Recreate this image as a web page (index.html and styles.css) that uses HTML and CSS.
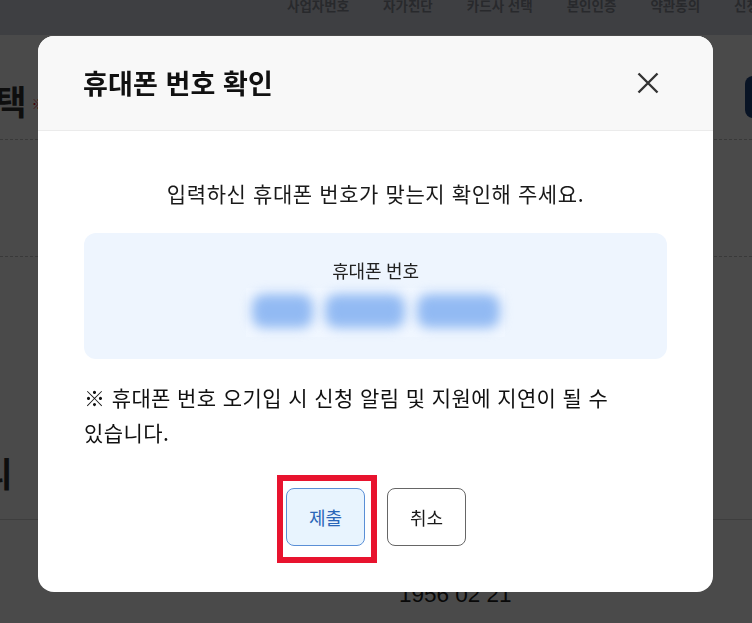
FILE: index.html
```html
<!DOCTYPE html>
<html lang="ko">
<head>
<meta charset="utf-8">
<title>휴대폰 번호 확인</title>
<link rel="stylesheet" href="styles.css">
</head>
<body>
<div class="page">
  <nav class="steps">
    <span>사업자번호</span>
    <span>자가진단</span>
    <span>카드사 선택</span>
    <span>본인인증</span>
    <span>약관동의</span>
    <span>신청완료</span>
  </nav>
  <section class="row row1">
    <div class="label label-first">선택</div>
    <span class="req">※</span>
    <span class="navy-btn"></span>
  </section>
  <section class="row row2"></section>
  <section class="row row3">
    <div class="label label-second">관리</div>
  </section>
  <section class="row row4">
    <div class="value">1956 02 21</div>
  </section>
</div>

<div class="overlay">
  <div class="dialog" role="dialog" aria-labelledby="dlg-title">
    <header class="dialog-head">
      <h2 id="dlg-title" class="dialog-title">휴대폰 번호 확인</h2>
      <button class="close-btn" aria-label="닫기">
        <svg viewBox="0 0 22 22" width="22" height="22">
          <path d="M1.5 1.5 L20.5 20.5 M20.5 1.5 L1.5 20.5" stroke="#333" stroke-width="2.4" stroke-linecap="butt" fill="none"/>
        </svg>
      </button>
    </header>
    <div class="dialog-body">
      <p class="lead">입력하신 휴대폰 번호가 맞는지 확인해 주세요.</p>
      <div class="phone-box">
        <div class="phone-label">휴대폰 번호</div>
        <div class="phone-masked">
          <span class="blob b1"></span>
          <span class="blob b2"></span>
          <span class="blob b3"></span>
        </div>
      </div>
      <p class="note">※ 휴대폰 번호 오기입 시 신청 알림 및 지원에 지연이 될 수 있습니다.</p>
      <div class="actions">
        <div class="submit-wrap">
          <button class="btn btn-submit">제출</button>
          <span class="highlight"></span>
        </div>
        <button class="btn btn-cancel">취소</button>
      </div>
    </div>
  </div>
</div>
</body>
</html>
```

FILE: styles.css
```css
* { box-sizing: border-box; }

html, body {
  margin: 0;
  padding: 0;
  width: 752px;
  height: 623px;
  overflow: hidden;
  background: #fff;
  font-family: "Noto Sans CJK KR", "Noto Sans", sans-serif;
}

.page {
  width: 752px;
  height: 623px;
  overflow: hidden;
  background: #fff;
}

.steps {
  height: 35px;
  background: #d6d9e4;
  display: flex;
  gap: 34px;
  padding-left: 287px;
  overflow: hidden;
  white-space: nowrap;
}

.steps span {
  font-size: 13.5px;
  font-weight: 700;
  line-height: 16px;
  margin-top: -3px;
  color: #8a8f98;
}

.row {
  display: flex;
  width: 752px;
}

.row1 {
  height: 105px;
  padding-top: 28px;
  align-items: center;
  border-bottom: 1px dashed #c4c4c4;
}

.label {
  font-size: 34px;
  font-weight: 700;
  color: #333;
  line-height: 44px;
  white-space: nowrap;
}

.label-first { margin-left: -36px; }

.req {
  font-size: 14px;
  line-height: 20px;
  color: #e0142d;
  margin-left: 5px;
  margin-top: 4px;
}

.navy-btn {
  margin-left: auto;
  margin-right: -40px;
  width: 47px;
  height: 42px;
  border-radius: 8px;
  background: #22457f;
  margin-top: -8px;
}

.row2 {
  height: 117px;
  border-bottom: 1px dashed #c4c4c4;
}

.row3 {
  height: 263px;
  align-items: flex-end;
  padding-bottom: 24px;
  border-bottom: 1px solid #d4d4d4;
}

.label-second { margin-left: -50px; }

.row4 {
  height: 103px;
  padding-left: 399px;
}

.value {
  font-family: "Liberation Sans", Arial, sans-serif;
  font-size: 22.5px;
  color: #222;
  margin-top: 62px;
  line-height: 26px;
}

/* overlay + dialog */
.overlay {
  position: fixed;
  inset: 0;
  background: rgba(0, 0, 0, 0.71);
  display: flex;
  justify-content: center;
  align-items: flex-start;
  padding-top: 36px;
}

.dialog {
  width: 675px;
  background: #fff;
  border-radius: 16px;
  overflow: hidden;
  margin-left: -1px;
}

.dialog-head {
  height: 95px;
  background: #f8f8f8;
  border-bottom: 1px solid #ebebeb;
  display: flex;
  align-items: center;
  justify-content: space-between;
  padding: 0 54px 0 45px;
}

.dialog-title {
  margin: 0;
  font-size: 27px;
  font-weight: 700;
  color: #111;
  line-height: 36px;
  letter-spacing: 0.1px;
}

.close-btn {
  border: 0;
  background: none;
  padding: 0;
  width: 22px;
  height: 22px;
  display: flex;
  margin-top: -1px;
}

.dialog-body {
  padding: 47px 46px 46px;
}

.lead {
  margin: 0;
  text-align: center;
  font-size: 21px;
  line-height: 30px;
  color: #1a1a1a;
  letter-spacing: 0.6px;
}

.phone-box {
  margin-top: 25px;
  height: 126px;
  background: #eef5fe;
  border-radius: 12px;
  padding-top: 25px;
  display: flex;
  flex-direction: column;
  align-items: center;
}

.phone-label {
  font-size: 18px;
  line-height: 24px;
  color: #222;
  letter-spacing: -0.2px;
}

.phone-masked {
  margin-top: 6px;
  width: 259px;
  height: 49px;
  background: #f1f7ff;
  display: flex;
  gap: 12px;
  padding: 6px 5px 0 6px;
}

.blob {
  display: block;
  height: 34px;
  border-radius: 12px;
  background: #92baf3;
  filter: blur(6px);
}

.b1 { width: 62px; }
.b2 { width: 82px; }
.b3 { width: 84px; }

.note {
  margin: 21px 0 0;
  font-size: 21px;
  line-height: 35px;
  color: #111;
  letter-spacing: 0.4px;
  word-break: keep-all;
}

.actions {
  margin-top: 38px;
  display: flex;
  justify-content: center;
  gap: 22px;
  padding-left: 1px;
}

.submit-wrap {
  position: relative;
  display: flex;
}

.btn {
  width: 79px;
  height: 58px;
  border-radius: 8px;
  font-family: "Noto Sans CJK KR", "Noto Sans", sans-serif;
  font-size: 18px;
  padding: 0;
  cursor: pointer;
}

.btn-submit {
  background: #e8f4fe;
  border: 1px solid #5a8fd6;
  color: #2a66b8;
}

.btn-cancel {
  background: #fff;
  border: 1px solid #666;
  color: #1a1a1a;
}

.highlight {
  position: absolute;
  top: -13px;
  left: -9px;
  right: -12px;
  bottom: -17px;
  border: 6px solid #e8132e;
  pointer-events: none;
}
```
